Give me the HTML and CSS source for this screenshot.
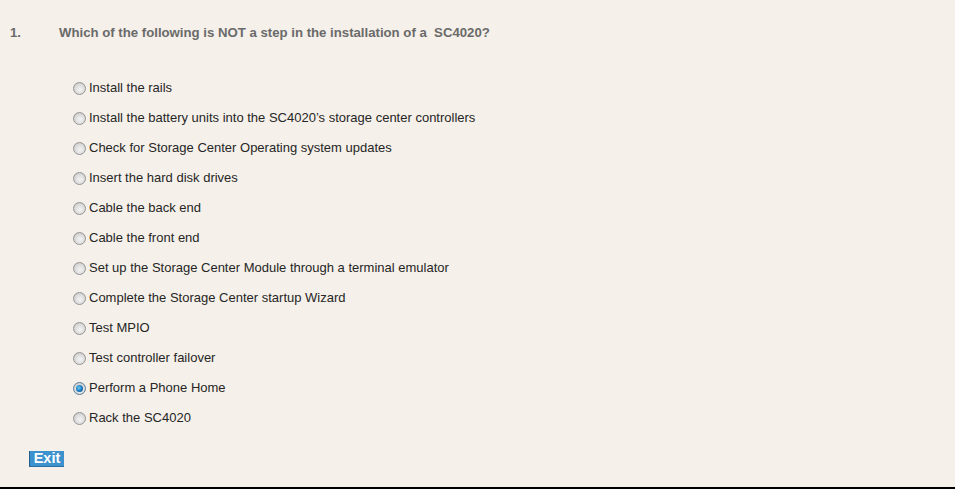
FILE: index.html
```html
<!DOCTYPE html>
<html>
<head>
<meta charset="utf-8">
<link rel="stylesheet" href="styles.css">
</head>
<body>
<div class="page">
  <div class="question">
    <span class="num">1.</span>
    <span class="qtext">Which of the following is NOT a step in the installation of a&nbsp; SC4020?</span>
  </div>
  <ul class="options">
    <li><span class="radio"></span>Install the rails</li>
    <li><span class="radio"></span>Install the battery units into the SC4020’s storage center controllers</li>
    <li><span class="radio"></span>Check for Storage Center Operating system updates</li>
    <li><span class="radio"></span>Insert the hard disk drives</li>
    <li><span class="radio"></span>Cable the back end</li>
    <li><span class="radio"></span>Cable the front end</li>
    <li><span class="radio"></span>Set up the Storage Center Module through a terminal emulator</li>
    <li><span class="radio"></span>Complete the Storage Center startup Wizard</li>
    <li><span class="radio"></span>Test MPIO</li>
    <li><span class="radio"></span>Test controller failover</li>
    <li><span class="radio checked"></span>Perform a Phone Home</li>
    <li><span class="radio"></span>Rack the SC4020</li>
  </ul>
  <div class="actions">
    <span class="exit">Exit</span>
  </div>
</div>
</body>
</html>
```
FILE: styles.css
```css
html, body {
  margin: 0;
  padding: 0;
  background: #f5f0e9;
}
.page {
  height: 487px;
  border-bottom: 2px solid #000;
  font-family: "Liberation Sans", Arial, sans-serif;
  font-size: 13px;
  box-sizing: content-box;
}
.question {
  display: flex;
  padding: 25px 0 0 10px;
  height: 16px;
  line-height: 16px;
  font-weight: bold;
  font-size: 13.2px;
  color: #6a6a6a;
}
.num {
  width: 49px;
}
.options {
  list-style: none;
  margin: 0;
  padding: 39px 0 0 73px;
  display: flex;
  flex-direction: column;
  gap: 14px;
}
.options li {
  display: flex;
  align-items: center;
  height: 16px;
  line-height: 16px;
  color: #262626;
}
.radio {
  width: 11px;
  height: 11px;
  border: 1px solid #959595;
  border-radius: 50%;
  background: radial-gradient(circle at 55% 60%, #f4f4f4 0%, #e2e2e2 40%, #cfcfcf 75%, #bdbdbd 100%);
  margin-right: 3px;
  box-sizing: content-box;
  position: relative;
}
.radio.checked {
  border-color: #5a7d9a;
}
.radio.checked::after {
  content: "";
  position: absolute;
  left: 2px;
  top: 2px;
  width: 7px;
  height: 7px;
  border-radius: 50%;
  background: radial-gradient(circle at 40% 40%, #6fc8f0 0%, #1c7fc4 50%, #0b3f74 100%);
}
.actions {
  padding: 25px 0 0 29px;
}
.exit {
  display: inline-block;
  width: 34px;
  height: 15px;
  line-height: 15px;
  background: #3d92cd;
  border-left: 1px solid #1f5f8e;
  border-bottom: 1px solid #2a6fa2;
  color: #fff;
  font-weight: bold;
  font-size: 14.5px;
  text-align: center;
}
```
